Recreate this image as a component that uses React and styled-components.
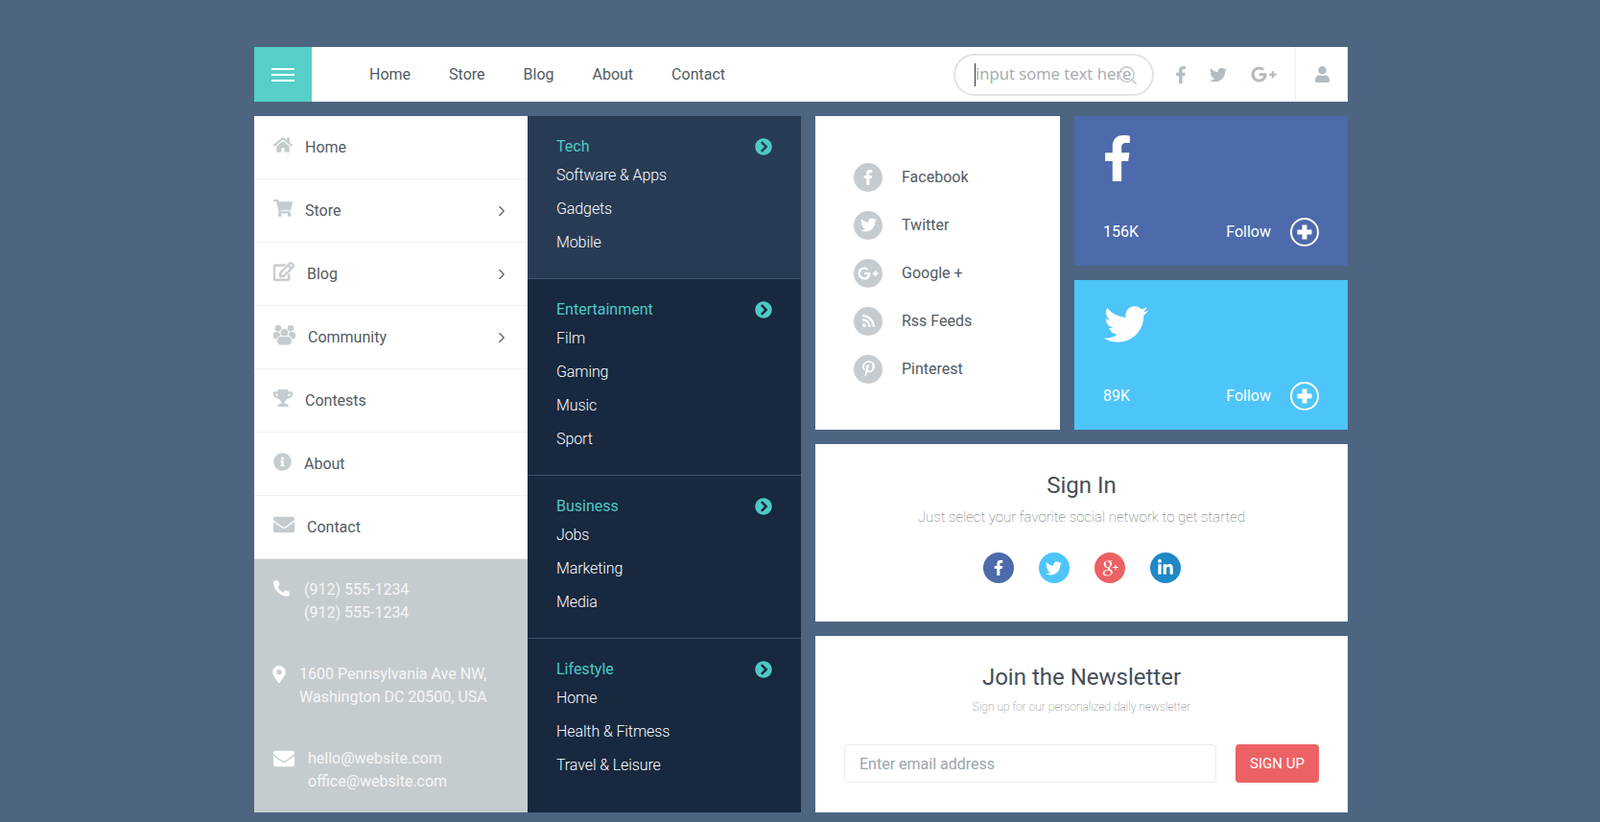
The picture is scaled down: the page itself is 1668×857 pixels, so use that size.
import React from "react";
import styled, { createGlobalStyle } from "styled-components";
import { ChevronRight, Search } from "lucide-react";
import {
  FaHome, FaShoppingCart, FaRegEdit, FaTrophy, FaInfoCircle, FaEnvelope,
  FaPhoneAlt, FaMapMarkerAlt, FaFacebookF, FaTwitter, FaGooglePlusG, FaRss, FaPinterestP,
  FaLinkedinIn, FaUser, FaChevronCircleRight,
} from "react-icons/fa";
import { TiSocialGooglePlus } from "react-icons/ti";

const Global = createGlobalStyle`
  html, body { margin: 0; padding: 0; background: #4d6580; }
  body { font-family: Roboto, "Liberation Sans", sans-serif; font-size: 16px; color: #525b63; }
  * { box-sizing: border-box; }
  svg { flex-shrink: 0; }
`;

const Page = styled.div`
  width: 1405px;
  padding: 49px 0 10px 265px;
  display: flex;
  flex-direction: column;
  gap: 15px;
`;

/* top bar */
const TopBar = styled.header`
  height: 57px;
  background: #fff;
  display: flex;
  align-items: center;
`;
const MenuTile = styled.button`
  width: 60px;
  height: 57px;
  border: 0;
  padding: 0;
  background: #55cfc8;
  display: flex;
  flex-direction: column;
  justify-content: center;
  align-items: center;
  gap: 4px;
`;
const MenuLine = styled.span`
  width: 24px;
  height: 2px;
  background: #fff;
`;
const TopNav = styled.nav`
  margin-left: 60px;
  display: flex;
  gap: 40px;
`;
const TopLink = styled.a`
  font-size: 16px;
  line-height: 24px;
  color: #525b63;
`;
const TopRight = styled.div`
  margin-left: auto;
  height: 100%;
  display: flex;
  align-items: center;
`;
const SearchBox = styled.div`
  position: relative;
  width: 209px;
  height: 44px;
  margin-right: 22px;
`;
const SearchInput = styled.input`
  width: 100%;
  height: 100%;
  border: 2px solid #e0e2e3;
  border-radius: 22px;
  padding: 0 0 2px 21px;
  outline: none;
  background: #fff;
  font-family: "Open Sans", sans-serif;
  font-size: 16.7px;
  &::placeholder { color: #a3a9ad; opacity: 1; }
`;
const Caret = styled.span`
  position: absolute;
  left: 22px;
  top: 10px;
  width: 1px;
  height: 24px;
  background: #333;
`;
const SearchGlyph = styled(Search)`
  position: absolute;
  left: 170px;
  top: 11px;
  color: #c8cbcd;
`;
const TopIcon = styled.a`
  display: flex;
  justify-content: center;
  align-items: center;
  width: ${(p) => p.$w}px;
  margin-right: ${(p) => p.$gap}px;
  color: #b3bcc0;
  font-size: ${(p) => p.$size}px;
  flex: none;
`;
const UserCell = styled.div`
  height: 100%;
  width: 55px;
  border-left: 1px solid #eef0f1;
  display: flex;
  justify-content: center;
  align-items: center;
  color: #b3bcc0;
  font-size: 17px;
`;

/* main layout */
const Main = styled.main`
  display: flex;
  gap: 15px;
`;
const Menus = styled.div`
  width: 570px;
  display: grid;
  grid-template-columns: 285px 285px;
`;
const SideColumn = styled.aside`
  background: #c5cccf;
  display: flex;
  flex-direction: column;
`;
const SideList = styled.div`
  background: #fff;
`;
const SideRow = styled.a`
  height: 66px;
  padding: 0 18px 0 20px;
  border-bottom: 1px solid #eef0f1;
  display: flex;
  align-items: center;
  color: #525b63;
`;
const SideIcon = styled.span`
  display: flex;
  justify-content: center;
  align-items: center;
  flex: none;
  width: ${(p) => p.$w}px;
  margin: 0 ${(p) => p.$gap}px 5px 0;
  color: #c5cccf;
  font-size: ${(p) => p.$size}px;
  svg.heavy { stroke: currentColor; stroke-width: 18; }
`;
const SideLabel = styled.span`
  flex: 1;
  line-height: 24px;
`;
const Contacts = styled.div`
  padding: 20px 20px 0;
  display: flex;
  flex-direction: column;
  gap: 40px;
  height: 264px;
`;
const ContactRow = styled.div`
  display: flex;
  color: #f5f6f7;
`;
const ContactIcon = styled.span`
  flex: none;
  width: ${(p) => p.$w}px;
  margin-right: ${(p) => p.$gap}px;
  height: 24px;
  display: flex;
  justify-content: center;
  align-items: center;
  padding-bottom: ${(p) => p.$lift}px;
  color: #fff;
  font-size: ${(p) => p.$size}px;
`;
const ContactText = styled.div`
  line-height: 24px;
`;

const CategoryColumn = styled.section`
  background: #17283f;
`;
const CategoryBlock = styled.div`
  padding: 20px 30px;
  background: ${(p) => (p.$active ? "#283b55" : "transparent")};
  border-bottom: ${(p) => (p.$last ? "0" : "1px solid #41546c")};
`;
const CategoryHead = styled.div`
  height: 24px;
  display: flex;
  justify-content: space-between;
  align-items: center;
  color: #4ec9c4;
  font-size: 18px;
`;
const CategoryName = styled.span`
  font-size: 16px;
  margin-bottom: 2px;
`;
const CategoryItem = styled.a`
  display: block;
  height: 35px;
  line-height: 35px;
  color: #fff;
  font-weight: 300;
  letter-spacing: -0.1px;
`;

/* right side */
const RightSide = styled.div`
  width: 555px;
  display: flex;
  flex-direction: column;
  gap: 15px;
`;
const TopCards = styled.div`
  display: grid;
  grid-template-columns: 255px 285px;
  grid-template-rows: 156px 156px;
  gap: 15px;
`;
const SocialCard = styled.div`
  grid-row: 1 / 3;
  background: #fff;
  padding-left: 40px;
  display: flex;
  flex-direction: column;
  justify-content: center;
  gap: 20px;
`;
const SocialRow = styled.a`
  display: flex;
  align-items: center;
  gap: 20px;
  color: #525b63;
`;
const SocialBullet = styled.span`
  width: 30px;
  height: 30px;
  border-radius: 50%;
  background: #c5cccf;
  color: #fff;
  font-size: ${(p) => p.$size || 15}px;
  display: flex;
  justify-content: center;
  align-items: center;
`;
const BrandCard = styled.div`
  background: ${(p) => p.$bg};
  color: #fff;
  padding: 20px 30px 20px;
  display: flex;
  flex-direction: column;
  justify-content: space-between;
`;
const BrandMark = styled.div`
  height: 48px;
  margin-left: ${(p) => p.$left}px;
  padding-top: ${(p) => p.$top}px;
  font-size: ${(p) => p.$size}px;
  line-height: 0;
`;
const BrandFoot = styled.div`
  display: flex;
  align-items: center;
`;
const Count = styled.span`
  margin: 0 auto 2px 0;
`;
const FollowLabel = styled.span`
  margin: 0 20px 2px 0;
`;
const PlusCircle = styled.span`
  width: 30px;
  height: 30px;
  border: 2px solid #fff;
  border-radius: 50%;
  display: flex;
  justify-content: center;
  align-items: center;
`;
const Panel = styled.div`
  background: #fff;
  height: ${(p) => p.$h}px;
  padding-top: ${(p) => p.$pad}px;
  text-align: center;
`;
const Title = styled.h2`
  margin: 0;
  font-weight: 400;
  color: #454f58;
  font-size: 24px;
  line-height: ${(p) => p.$line}px;
`;
const Subtitle = styled.p`
  color: #666c72;
  font-weight: 100;
  margin: ${(p) => p.$mt}px 0 0;
  font-size: ${(p) => p.$size}px;
  line-height: ${(p) => p.$line}px;
`;
const Networks = styled.div`
  margin-top: 27px;
  display: flex;
  justify-content: center;
  gap: 26px;
`;
const NetworkButton = styled.a`
  width: 32px;
  height: 32px;
  border-radius: 50%;
  background: ${(p) => p.$bg};
  color: #fff;
  font-size: ${(p) => p.$size}px;
  display: flex;
  justify-content: center;
  align-items: center;
`;
const SignupForm = styled.form`
  margin-top: 30px;
  padding: 0 30px;
  display: flex;
  gap: 20px;
`;
const EmailInput = styled.input`
  flex: 1;
  height: 40px;
  border: 1px solid #e9ebec;
  border-radius: 4px;
  padding: 0 15px;
  outline: none;
  font-family: Roboto, sans-serif;
  font-size: 16px;
  &::placeholder { color: #9aa5ad; opacity: 1; }
`;
const SignupButton = styled.button`
  width: 87px;
  height: 40px;
  border: 0;
  border-radius: 4px;
  background: #ec6264;
  color: #fff;
  font-family: Roboto, sans-serif;
  font-weight: 400;
  font-size: 15px;
`;

const CommunityGlyph = () => (
  <svg width="23" height="21" viewBox="0 0 23 21" fill="currentColor" aria-hidden="true">
    <circle cx="5" cy="3.3" r="3.3" />
    <circle cx="18" cy="3.3" r="3.3" />
    <rect x="0" y="7" width="7" height="7.5" rx="3" />
    <rect x="16" y="7" width="7" height="7.5" rx="3" />
    <circle cx="11.5" cy="8" r="4.4" stroke="#fff" strokeWidth="0.9" />
    <rect x="3.6" y="11.6" width="15.8" height="9.4" rx="4" stroke="#fff" strokeWidth="0.9" />
  </svg>
);
const PlusGlyph = () => (
  <svg width="16" height="16" viewBox="0 0 16 16" fill="currentColor" aria-hidden="true">
    <path d="M5.5 0.5h5v5h5v5h-5v5h-5v-5h-5v-5h5z" />
  </svg>
);
const HeavyEdit = () => <FaRegEdit className="heavy" />;

const sideRows = [
  ["Home", FaHome, 20, 13, 20, false],
  ["Store", FaShoppingCart, 20, 13, 20, true],
  ["Blog", HeavyEdit, 22, 13, 22, true],
  ["Community", CommunityGlyph, 23, 13, 23, true],
  ["Contests", FaTrophy, 20, 13, 20, false],
  ["About", FaInfoCircle, 18, 14, 19, false],
  ["Contact", FaEnvelope, 22, 13, 22, false],
];
const contacts = [
  [FaPhoneAlt, 17, 15, 17, 4, ["(912) 555-1234", "(912) 555-1234"]],
  [FaMapMarkerAlt, 12, 15, 18, 1, ["1600 Pennsylvania Ave NW,", "Washington DC 20500, USA"]],
  [FaEnvelope, 22, 14, 22, 0, ["hello@website.com", "office@website.com"]],
];
const categories = [
  ["Tech", ["Software & Apps", "Gadgets", "Mobile"]],
  ["Entertainment", ["Film", "Gaming", "Music", "Sport"]],
  ["Business", ["Jobs", "Marketing", "Media"]],
  ["Lifestyle", ["Home", "Health & Fitmess", "Travel & Leisure"]],
];
const socials = [
  ["Facebook", FaFacebookF, 16],
  ["Twitter", FaTwitter, 17],
  ["Google +", FaGooglePlusG, 22],
  ["Rss Feeds", FaRss, 15],
  ["Pinterest", FaPinterestP, 17],
];

export default function App() {
  return (
    <>
      <Global />
      <Page>
        <TopBar>
          <MenuTile aria-label="Menu">
            <MenuLine />
            <MenuLine />
            <MenuLine />
          </MenuTile>
          <TopNav>
            {["Home", "Store", "Blog", "About", "Contact"].map((t) => (
              <TopLink key={t}>{t}</TopLink>
            ))}
          </TopNav>
          <TopRight>
            <SearchBox>
              <SearchInput placeholder="input some text here" />
              <Caret />
              <SearchGlyph size={23} strokeWidth={1.7} />
            </SearchBox>
            <TopIcon $w={11} $gap={25} $size={18}><FaFacebookF /></TopIcon>
            <TopIcon $w={17} $gap={26} $size={18}><FaTwitter /></TopIcon>
            <TopIcon $w={26} $gap={20} $size={27}><FaGooglePlusG /></TopIcon>
            <UserCell><FaUser /></UserCell>
          </TopRight>
        </TopBar>

        <Main>
          <Menus>
            <SideColumn>
              <SideList>
                {sideRows.map(([label, Icon, w, gap, size, more]) => (
                  <SideRow key={label}>
                    <SideIcon $w={w} $gap={gap} $size={size}><Icon /></SideIcon>
                    <SideLabel>{label}</SideLabel>
                    {more && <ChevronRight size={18} strokeWidth={1.5} />}
                  </SideRow>
                ))}
              </SideList>
              <Contacts>
                {contacts.map(([Icon, w, gap, size, lift, lines]) => (
                  <ContactRow key={lines[0]}>
                    <ContactIcon $w={w} $gap={gap} $size={size} $lift={lift}><Icon /></ContactIcon>
                    <ContactText>
                      {lines.map((l) => <div key={l}>{l}</div>)}
                    </ContactText>
                  </ContactRow>
                ))}
              </Contacts>
            </SideColumn>

            <CategoryColumn>
              {categories.map(([name, items], i) => (
                <CategoryBlock key={name} $active={i === 0} $last={i === 3}>
                  <CategoryHead>
                    <CategoryName>{name}</CategoryName>
                    <FaChevronCircleRight />
                  </CategoryHead>
                  {items.map((it) => <CategoryItem key={it}>{it}</CategoryItem>)}
                </CategoryBlock>
              ))}
            </CategoryColumn>
          </Menus>

          <RightSide>
            <TopCards>
              <SocialCard>
                {socials.map(([label, Icon, size]) => (
                  <SocialRow key={label}>
                    <SocialBullet $size={size}><Icon /></SocialBullet>
                    {label}
                  </SocialRow>
                ))}
              </SocialCard>
              <BrandCard $bg="#4d6aaa">
                <BrandMark $left={-9} $top={0} $size={48}><FaFacebookF /></BrandMark>
                <BrandFoot>
                  <Count>156K</Count>
                  <FollowLabel>Follow</FollowLabel>
                  <PlusCircle><PlusGlyph /></PlusCircle>
                </BrandFoot>
              </BrandCard>
              <BrandCard $bg="#4dc5f9">
                <BrandMark $left={1} $top={3} $size={46}><FaTwitter /></BrandMark>
                <BrandFoot>
                  <Count>89K</Count>
                  <FollowLabel>Follow</FollowLabel>
                  <PlusCircle><PlusGlyph /></PlusCircle>
                </BrandFoot>
              </BrandCard>
            </TopCards>

            <Panel $h={185} $pad={30}>
              <Title $line={26}>Sign In</Title>
              <Subtitle $mt={10} $size={15} $line={20}>Just select your favorite social network to get started</Subtitle>
              <Networks>
                <NetworkButton $bg="#4d6aaa" $size={16}><FaFacebookF /></NetworkButton>
                <NetworkButton $bg="#4dc5f9" $size={17}><FaTwitter /></NetworkButton>
                <NetworkButton $bg="#ec6264" $size={26}><TiSocialGooglePlus /></NetworkButton>
                <NetworkButton $bg="#1f88c7" $size={18}><FaLinkedinIn /></NetworkButton>
              </Networks>
            </Panel>

            <Panel $h={184} $pad={29}>
              <Title $line={28}>Join the Newsletter</Title>
              <Subtitle $mt={8} $size={12} $line={18}>Sign up for our personalized daily newsletter</Subtitle>
              <SignupForm>
                <EmailInput placeholder="Enter email address" />
                <SignupButton type="button">SIGN UP</SignupButton>
              </SignupForm>
            </Panel>
          </RightSide>
        </Main>
      </Page>
    </>
  );
}
